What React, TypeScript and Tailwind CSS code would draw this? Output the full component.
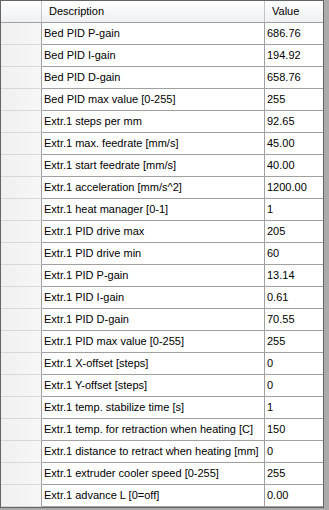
import React from 'react';

const rows: [string, string][] = [
  ['Bed PID P-gain', '686.76'],
  ['Bed PID I-gain', '194.92'],
  ['Bed PID D-gain', '658.76'],
  ['Bed PID max value [0-255]', '255'],
  ['Extr.1 steps per mm', '92.65'],
  ['Extr.1 max. feedrate [mm/s]', '45.00'],
  ['Extr.1 start feedrate [mm/s]', '40.00'],
  ['Extr.1 acceleration [mm/s^2]', '1200.00'],
  ['Extr.1 heat manager [0-1]', '1'],
  ['Extr.1 PID drive max', '205'],
  ['Extr.1 PID drive min', '60'],
  ['Extr.1 PID P-gain', '13.14'],
  ['Extr.1 PID I-gain', '0.61'],
  ['Extr.1 PID D-gain', '70.55'],
  ['Extr.1 PID max value [0-255]', '255'],
  ['Extr.1 X-offset [steps]', '0'],
  ['Extr.1 Y-offset [steps]', '0'],
  ['Extr.1 temp. stabilize time [s]', '1'],
  ['Extr.1 temp. for retraction when heating [C]', '150'],
  ['Extr.1 distance to retract when heating [mm]', '0'],
  ['Extr.1 extruder cooler speed [0-255]', '255'],
  ['Extr.1 advance L [0=off]', '0.00'],
];

export default function App() {
  return (
    <div className="w-[329px] h-[510px] bg-[#ababab] overflow-hidden font-['Liberation_Sans',Arial,sans-serif] text-[11px] text-black">
      <div className="w-[324px] border border-[#646464] bg-white">
        {/* header */}
        <div className="flex h-[22px] border-b border-[#a0a0a0] bg-gradient-to-b from-white to-[#eef0f2]">
          <div className="w-[41px] border-r border-[#c5c5c5]" />
          <div className="w-[223px] border-r border-[#c5c5c5] pl-[7px] leading-[21px]">Description</div>
          <div className="flex-1 pl-[7px] leading-[21px]">Value</div>
        </div>
        {rows.map(([d, v]) => (
          <div key={d} className="flex h-[22px]">
            <div className="w-[41px] border-r border-b border-[#a0a0a0] bg-gradient-to-r from-[#f0f0f0] to-[#f7f7f7] border-b-[#d8d8d8]" />
            <div className="w-[223px] border-r border-b border-[#a0a0a0] pl-[2px] leading-[21px] whitespace-nowrap overflow-hidden">{d}</div>
            <div className="flex-1 border-b border-[#a0a0a0] pl-[2px] leading-[21px]">{v}</div>
          </div>
        ))}
      </div>
    </div>
  );
}
